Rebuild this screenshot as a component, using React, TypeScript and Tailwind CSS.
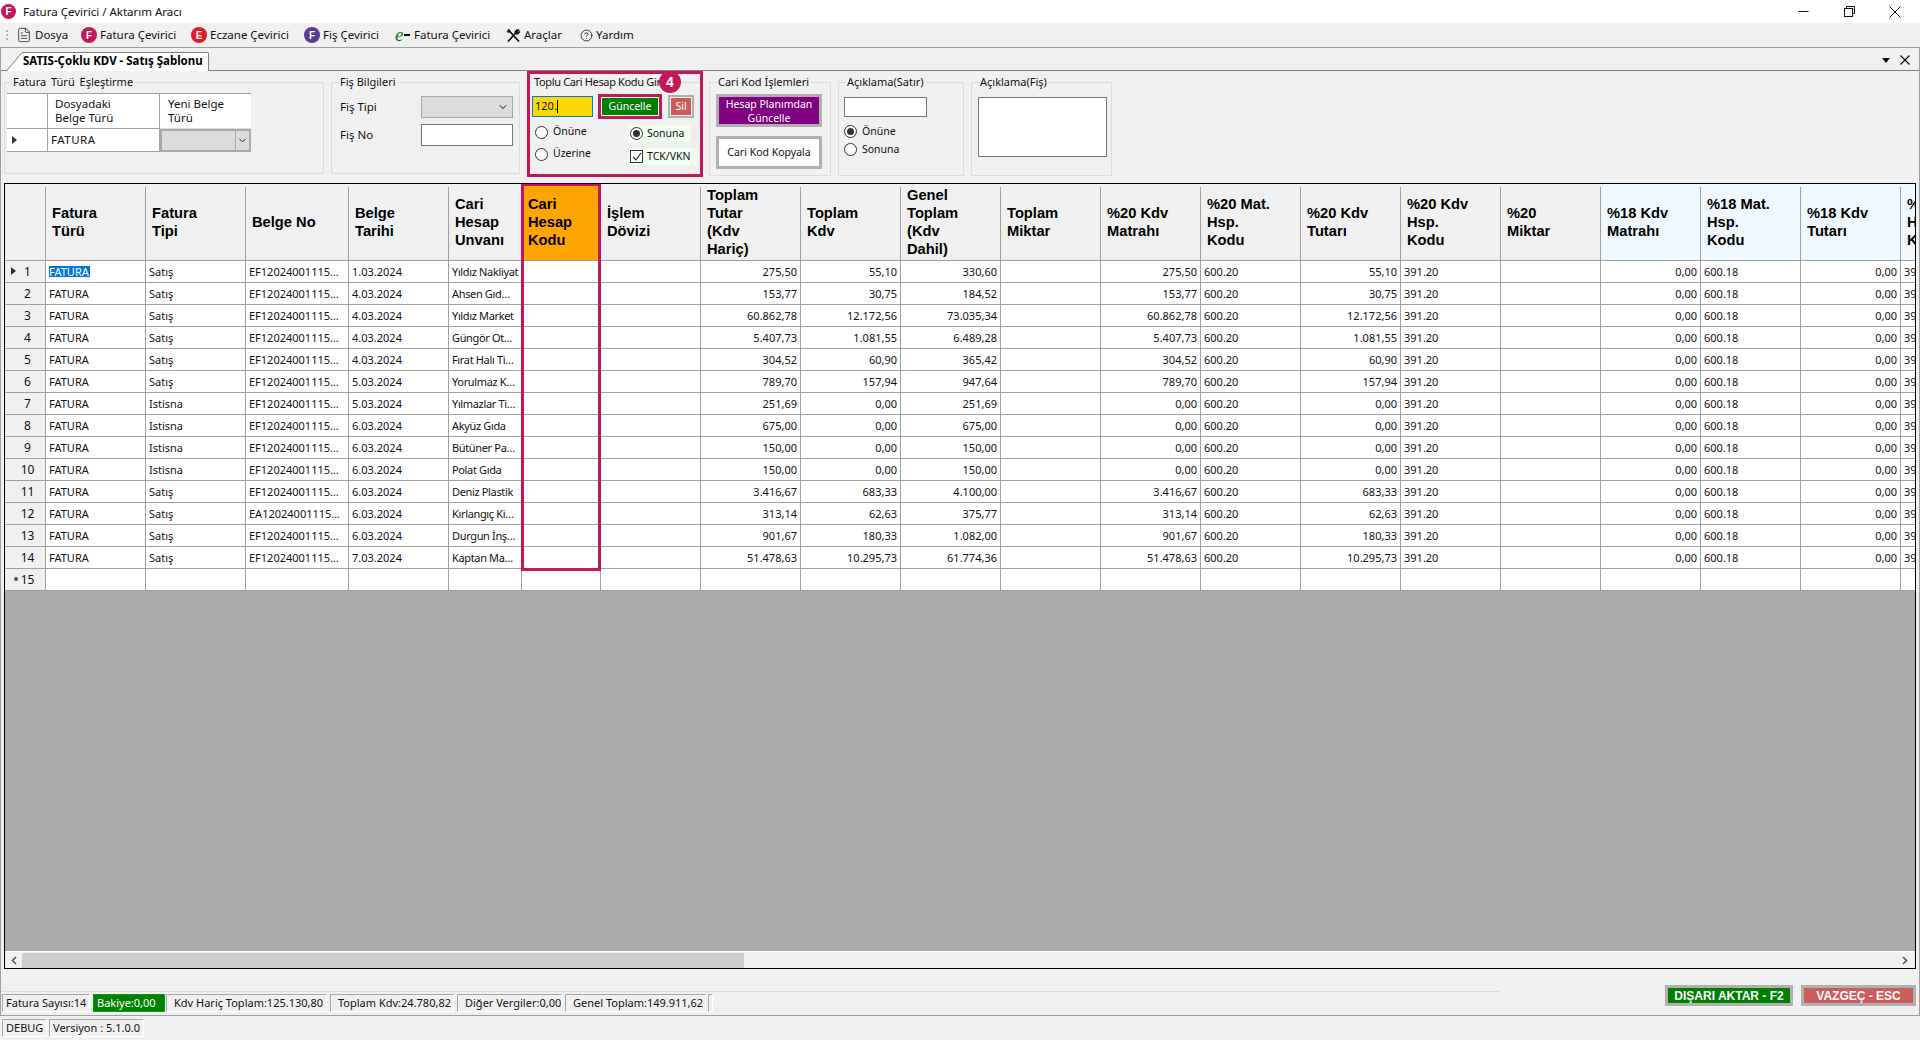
import React from "react";
import { FileText, CircleHelp, ChevronDown } from "lucide-react";

const Logo = ({ c, l, size = 16 }: { c: string; l: string; size?: number }) => (
  <span
    className={`flex shrink-0 items-center justify-center rounded-full font-['Liberation_Sans',sans-serif] font-bold text-white text-[10px] ${c}`}
    style={{ width: size, height: size }}
  >
    {l}
  </span>
);

const Radio = ({ on }: { on?: boolean }) => (
  <span className="flex h-[13px] w-[13px] shrink-0 items-center justify-center rounded-full border border-[#333] bg-white">
    {on && <span className="h-[7px] w-[7px] rounded-full bg-[#333]" />}
  </span>
);

const Group = ({
  title,
  className,
  titleClass = "left-[7px]",
  children,
}: {
  title: string;
  className: string;
  titleClass?: string;
  children?: React.ReactNode;
}) => (
  <div className={`relative shrink-0 border border-[#dcdcdc] ${className}`}>
    <span className={`absolute top-[-9px] bg-[#f0f0f0] px-[1px] text-[11px] leading-[16px] text-[#111] whitespace-nowrap ${titleClass}`}>{title}</span>
    {children}
  </div>
);

const Tri = () => <span className="block h-0 w-0 border-y-[4px] border-l-[5px] border-y-transparent border-l-[#333]" />;

const MENU = [
  { w: "w-[65px]", icon: <FileText size={16} strokeWidth={1.1} className="text-[#111]" />, t: "Dosya" },
  { w: "w-[110px]", icon: <Logo c="bg-[#c2185b]" l="F" />, t: "Fatura Çevirici" },
  { w: "w-[113px]", icon: <Logo c="bg-[#e01b24]" l="E" />, t: "Eczane Çevirici" },
  { w: "w-[91px]", icon: <Logo c="bg-[#5c3a8e]" l="F" />, t: "Fiş Çevirici" },
  {
    w: "w-[111px]",
    icon: (
      <span className="flex w-[16px] items-center font-['Liberation_Serif',serif] italic text-[19px] leading-[16px] text-[#008000]">
        e<span className="ml-[1px] h-[1.5px] w-[6px] bg-[#111]" />
      </span>
    ),
    t: "Fatura Çevirici",
  },
  {
    w: "w-[74px]",
    icon: (
      <svg width="15" height="15" viewBox="0 0 15 15" fill="none" stroke="#111" strokeWidth="1.8">
        <path d="M2 1.5l11 12M13 1.5L2 13.5" />
        <path d="M9 5.5c-.8-1.8.5-4 2.8-4l-1.3 1.8 1.2 1.2L13.8 3c.3 2-1.6 3.8-3.6 3.2" fill="#111" strokeWidth=".6" />
        <path d="M1 3.5l2-2 1.5 1.5-2 2z" fill="#111" strokeWidth=".4" />
      </svg>
    ),
    t: "Araçlar",
  },
  { w: "w-[60px]", icon: <CircleHelp size={13} strokeWidth={1.5} className="text-[#111]" />, t: "Yardım" },
];

const HEADERS: { l: string[]; c?: string }[] = [
  { l: ["Fatura", "Türü"] },
  { l: ["Fatura", "Tipi"] },
  { l: ["Belge No"] },
  { l: ["Belge", "Tarihi"] },
  { l: ["Cari", "Hesap", "Unvanı"] },
  { l: ["Cari", "Hesap", "Kodu"], c: "bg-[#ffa500]" },
  { l: ["İşlem", "Dövizi"] },
  { l: ["Toplam", "Tutar", "(Kdv", "Hariç)"] },
  { l: ["Toplam", "Kdv"] },
  { l: ["Genel", "Toplam", "(Kdv", "Dahil)"] },
  { l: ["Toplam", "Miktar"] },
  { l: ["%20 Kdv", "Matrahı"] },
  { l: ["%20 Mat.", "Hsp.", "Kodu"] },
  { l: ["%20 Kdv", "Tutarı"] },
  { l: ["%20 Kdv", "Hsp.", "Kodu"] },
  { l: ["%20", "Miktar"] },
  { l: ["%18 Kdv", "Matrahı"], c: "bg-[#f0f8ff]" },
  { l: ["%18 Mat.", "Hsp.", "Kodu"], c: "bg-[#f0f8ff]" },
  { l: ["%18 Kdv", "Tutarı"], c: "bg-[#f0f8ff]" },
  { l: ["%18 Kdv", "Hsp.", "Kodu"], c: "bg-[#f0f8ff]" },
];

const RAW: [string, string, string, string, string, string, string][] = [
  ["Satış", "EF12024001115…", "1.03.2024", "Yıldız Nakliyat", "275,50", "55,10", "330,60"],
  ["Satış", "EF12024001115…", "4.03.2024", "Ahsen Gıd…", "153,77", "30,75", "184,52"],
  ["Satış", "EF12024001115…", "4.03.2024", "Yıldız Market", "60.862,78", "12.172,56", "73.035,34"],
  ["Satış", "EF12024001115…", "4.03.2024", "Güngör Ot…", "5.407,73", "1.081,55", "6.489,28"],
  ["Satış", "EF12024001115…", "4.03.2024", "Fırat Halı Ti…", "304,52", "60,90", "365,42"],
  ["Satış", "EF12024001115…", "5.03.2024", "Yorulmaz K…", "789,70", "157,94", "947,64"],
  ["Istisna", "EF12024001115…", "5.03.2024", "Yılmazlar Ti…", "251,69", "0,00", "251,69"],
  ["Istisna", "EF12024001115…", "6.03.2024", "Akyüz Gıda", "675,00", "0,00", "675,00"],
  ["Istisna", "EF12024001115…", "6.03.2024", "Bütüner Pa…", "150,00", "0,00", "150,00"],
  ["Istisna", "EF12024001115…", "6.03.2024", "Polat Gıda", "150,00", "0,00", "150,00"],
  ["Satış", "EF12024001115…", "6.03.2024", "Deniz Plastik", "3.416,67", "683,33", "4.100,00"],
  ["Satış", "EA12024001115…", "6.03.2024", "Kırlangıç Ki…", "313,14", "62,63", "375,77"],
  ["Satış", "EF12024001115…", "6.03.2024", "Durgun İnş…", "901,67", "180,33", "1.082,00"],
  ["Satış", "EF12024001115…", "7.03.2024", "Kaptan Ma…", "51.478,63", "10.295,73", "61.774,36"],
];

const GRID =
  "grid grid-cols-[41px_100px_100px_103px_100px_73px_79px_100px_100px_100px_100px_100px_100px_100px_100px_100px_100px_100px_100px_100px_100px]";

const Cell = ({ v, right, tight }: { v?: string; right?: boolean; tight?: boolean }) => (
  <div
    className={`h-[22px] overflow-hidden whitespace-nowrap border-b border-r border-[#a0a0a0] bg-white leading-[21px] ${right ? "pr-[3px] text-right" : "pl-[3px] text-left"} ${tight ? "tracking-[-0.35px]" : ""}`}
  >
    {v}
  </div>
);

const Row = ({ i, r }: { i: number; r?: (typeof RAW)[number] }) => {
  const iptal = r && r[5] === "0,00";
  const vals: { v?: string; right?: boolean; tight?: boolean }[] = r
    ? [
        { v: "FATURA" },
        { v: r[0] },
        { v: r[1] },
        { v: r[2] },
        { v: r[3], tight: true },
        {},
        {},
        { v: r[4], right: true },
        { v: r[5], right: true },
        { v: r[6], right: true },
        {},
        { v: iptal ? "0,00" : r[4], right: true },
        { v: "600.20" },
        { v: r[5], right: true },
        { v: "391.20" },
        {},
        { v: "0,00", right: true },
        { v: "600.18" },
        { v: "0,00", right: true },
        { v: "391.18" },
      ]
    : Array.from({ length: 20 }, () => ({}));
  return (
    <div className={GRID}>
      <div className="relative flex h-[22px] items-center justify-center border-b border-r border-[#a0a0a0] bg-[#f0f0f0] pl-[7px] pr-[2px] text-[12px]">
        {i === 1 && (
          <span className="absolute left-[6px] top-[6px]">
            <Tri />
          </span>
        )}
        {!r && <span className="absolute left-[9px] top-[8px] h-[4px] w-[4px] rounded-full bg-[#555]" />}
        {i}
      </div>
      {vals.map((c, k) =>
        i === 1 && k === 0 ? (
          <div key={k} className="h-[22px] border-b border-r border-[#a0a0a0] bg-white pl-[3px] pt-[5px]">
            <span className="block h-[11px] w-[41px] bg-[#0078d7] text-[11px] leading-[11px] text-white">FATURA</span>
          </div>
        ) : (
          <Cell key={k} v={c.v} right={c.right} tight={c.tight} />
        )
      )}
    </div>
  );
};

const Stat = ({ w, ml, children, green }: { w: string; ml: string; children?: React.ReactNode; green?: boolean }) => (
  <div
    className={`${w} ${ml} h-[18px] shrink-0 overflow-hidden whitespace-nowrap border pl-[3px] leading-[16px] ${
      green ? "border-[#00a000] bg-[#008000] text-white" : "border-b-white border-l-[#a8a8a8] border-r-white border-t-[#a8a8a8]"
    }`}
  >
    {children}
  </div>
);

export default function App() {
  return (
    <div className="flex h-[1040px] w-[1920px] flex-col overflow-hidden bg-[#f0f0f0] font-['Noto_Sans',sans-serif] text-[11px] text-[#111]">
      {/* Title bar */}
      <div className="flex h-[23px] shrink-0 items-center bg-white pl-[1px]">
        <Logo c="bg-[#c2185b]" l="F" size={15} />
        <span className="ml-[7px] text-[11.5px]">Fatura Çevirici / Aktarım Aracı</span>
        <div className="ml-auto flex items-center pr-[19px]">
          <svg width="11" height="11" viewBox="0 0 11 11" className="mr-[35px]"><path d="M0.5 5.5h10" stroke="#111" /></svg>
          <svg width="11" height="11" viewBox="0 0 11 11" className="mr-[34px]" fill="none" stroke="#111"><path d="M2.5 2.5v-2h8v7h-2" /><rect x=".5" y="2.5" width="8" height="8" /></svg>
          <svg width="12" height="12" viewBox="0 0 12 12" stroke="#111"><path d="M.5.5l11 11M11.5.5l-11 11" /></svg>
        </div>
      </div>

      {/* Menu */}
      <div className="flex h-[24px] shrink-0 items-center pl-[6px] text-[11.5px]">
        <div className="mr-[8px] flex w-[2px] flex-col gap-[2px]">
          <span className="h-[2px] w-[2px] bg-[#b0b0b0]" />
          <span className="h-[2px] w-[2px] bg-[#b0b0b0]" />
          <span className="h-[2px] w-[2px] bg-[#b0b0b0]" />
        </div>
        {MENU.map((m, i) => (
          <div key={i} className={`flex ${m.w} items-center gap-[3px] whitespace-nowrap`}>
            {m.icon}
            <span>{m.t}</span>
          </div>
        ))}
      </div>

      {/* Main panel */}
      <div className="flex h-[969px] shrink-0 flex-col border border-[#a0a0a0]">
        {/* tab strip */}
        <div className="flex h-[23px] shrink-0 items-end border-b border-[#808080] pl-[6px]">
          <div className="-mb-px flex h-[19px]">
            <svg width="16" height="19" viewBox="0 0 16 19" className="shrink-0">
              <path d="M0 19L15 .5H16V19z" fill="#fff" />
              <path d="M0 18.5L15 .5h1" fill="none" stroke="#808080" />
            </svg>
            <div className="flex w-[186px] items-center rounded-tr-[2px] border-r border-t border-[#808080] bg-white pb-[2px] font-bold text-[11.5px] text-black whitespace-nowrap">
              SATIS-Çoklu KDV - Satış Şablonu
            </div>
          </div>
          <div className="ml-auto mb-[5px] flex items-center pr-[9px]">
            <span className="mr-[10px] h-0 w-0 border-x-[4px] border-t-[5px] border-x-transparent border-t-[#111]" />
            <svg width="10" height="10" viewBox="0 0 10 10" stroke="#111" strokeWidth="1.2"><path d="M.5.5l9 9M9.5.5l-9 9" /></svg>
          </div>
        </div>

        {/* groups */}
        <div className="flex h-[112px] shrink-0 items-start pl-[3px]">
          <Group title="Fatura Türü Eşleştirme" className="mt-[11px] h-[92px] w-[320px] pl-[2px] pt-[10px]" titleClass="left-[7px] [word-spacing:2px]">
            <div className="grid w-[244px] grid-cols-[41px_112px_91px] grid-rows-[35px_23px] border-t border-[#a0a0a0] text-[11.5px]">
              <div className="border-b border-r border-[#a0a0a0] bg-white" />
              <div className="border-b border-r border-[#a0a0a0] bg-white pl-[7px] pt-[3px] leading-[14px]">Dosyadaki<br />Belge Türü</div>
              <div className="border-b border-[#dcdcdc] bg-white pl-[8px] pt-[3px] leading-[14px]">Yeni Belge<br />Türü</div>
              <div className="flex items-center border-b border-r border-[#a0a0a0] bg-white pl-[5px]"><Tri /></div>
              <div className="flex items-center border-b border-r border-[#a0a0a0] bg-white pl-[3px] tracking-[0.5px]">FATURA</div>
              <div className="flex items-center justify-end border-2 border-[#a9a9a9] bg-[#dcdcdc]">
                <span className="flex h-full w-[14px] items-center justify-center border-l border-[#a9a9a9]"><ChevronDown size={11} /></span>
              </div>
            </div>
          </Group>

          <Group title="Fiş Bilgileri" className="ml-[7px] mt-[11px] h-[92px] w-[189px] pl-[8px] pr-[6px] pt-[13px]">
            <div className="flex flex-col gap-[6px] text-[11.5px]">
              <div className="flex h-[22px] items-center justify-between">
                <span>Fiş Tipi</span>
                <span className="flex h-full w-[92px] items-center justify-end border border-[#a9a9a9] bg-[#dcdcdc] pr-[3px]"><ChevronDown size={12} /></span>
              </div>
              <div className="flex h-[22px] items-center justify-between">
                <span>Fiş No</span>
                <span className="h-full w-[92px] border border-[#767676] bg-white" />
              </div>
            </div>
          </Group>

          {/* Toplu */}
          <div className="relative ml-[7px] h-[106px] w-[176px] shrink-0 border-[3px] border-[#c2185b]">
            <Group title="Toplu Cari Hesap Kodu Gir" titleClass="left-[3px] tracking-[-0.35px]" className="mt-[8px] h-[92px] w-full border-x-0 border-b-0 pl-[2px] pt-[11px] text-[10.5px]">
              <div className="flex items-center">
                <div className="flex h-[21px] w-[61px] items-center border border-[#0078d7] bg-[#ffd700] pl-[2px] text-[11px]">
                  120.<span className="h-[13px] w-px bg-black" />
                </div>
                <div className="ml-[5px] h-[25px] w-[64px] border-[3px] border-[#c2185b] p-px">
                  <div className="flex h-full items-center justify-center bg-[#008000] text-[10.5px] text-white">Güncelle</div>
                </div>
                <div className="ml-[6px] h-[23px] w-[26px] border-[2px] border-[#b0b0b0] p-[1px]">
                  <div className="flex h-full items-center justify-center bg-[#cd5c5c] text-[10.5px] text-white">Sil</div>
                </div>
              </div>
              <div className="mt-[6px] flex">
                <div className="flex w-[97px] flex-col gap-[8px] pl-[3px]">
                  <label className="flex h-[14px] items-center gap-[5px]"><Radio />Önüne</label>
                  <label className="flex h-[14px] items-center gap-[5px]"><Radio />Üzerine</label>
                </div>
                <div className="flex flex-col gap-[6px]">
                  <label className="flex h-[17px] w-[61px] items-center gap-[4px] bg-[#f0fff0] pl-[1px]"><Radio on />Sonuna</label>
                  <label className="flex h-[17px] w-[68px] items-center gap-[4px] bg-[#f0fff0] pl-[1px]">
                    <span className="flex h-[13px] w-[13px] items-center justify-center border border-[#333] bg-white">
                      <svg width="10" height="10" viewBox="0 0 10 10" fill="none" stroke="#222" strokeWidth="1.1"><path d="M1 5l3 3 5-7" /></svg>
                    </span>
                    TCK/VKN
                  </label>
                </div>
              </div>
            </Group>
            <span className="absolute left-[129px] top-[-3px] flex h-[22px] w-[22px] items-center justify-center rounded-full bg-[#c2185b] font-['Liberation_Sans',sans-serif] font-bold text-[14px] text-white">4</span>
          </div>

          <Group title="Cari Kod İşlemleri" className="ml-[6px] mt-[11px] h-[94px] w-[122px] pl-[6px] pt-[11px] text-[10.5px]">
            <div className="flex w-[106px] flex-col gap-[9px]">
              <div className="h-[33px] border-[3px] border-[#b0b0b0] bg-[#800080] pt-px text-center leading-[13.5px] text-white">Hesap Planımdan<br />Güncelle</div>
              <div className="flex h-[33px] items-center justify-center border-[3px] border-[#b0b0b0] bg-white pt-px">Cari Kod Kopyala</div>
            </div>
          </Group>

          <Group title="Açıklama(Satır)" className="ml-[7px] mt-[11px] h-[94px] w-[126px] pl-[5px] pt-[14px] text-[10.5px]">
            <div className="h-[20px] w-[83px] border border-[#767676] bg-white" />
            <div className="mt-[8px] flex flex-col gap-[5px]">
              <label className="flex h-[13px] items-center gap-[5px]"><Radio on />Önüne</label>
              <label className="flex h-[13px] items-center gap-[5px]"><Radio />Sonuna</label>
            </div>
          </Group>

          <Group title="Açıklama(Fiş)" className="ml-[7px] mt-[11px] h-[94px] w-[141px] pl-[6px] pt-[14px]">
            <div className="h-[60px] w-[129px] border border-[#767676] bg-white" />
          </Group>
        </div>

        {/* data grid */}
        <div className="ml-[3px] flex h-[786px] w-[1912px] shrink-0 flex-col border border-black bg-[#ababab]">
          <div className="relative min-h-0 flex-1 overflow-hidden">
            <div className={GRID}>
              <div className="h-[77px] border-b border-[#a0a0a0] bg-[#f0f0f0]" />
              {HEADERS.map((h, i) => (
                <div
                  key={i}
                  className={`flex h-[77px] items-center border-b border-[#a0a0a0] pl-[6px] font-['Liberation_Sans',sans-serif] font-bold text-[14.7px] leading-[18px] text-black whitespace-nowrap ${h.c ?? "bg-[#f0f0f0]"}`}
                >
                  <div>
                    {h.l.map((x, k) => (
                      <div key={k}>{x}</div>
                    ))}
                  </div>
                </div>
              ))}
            </div>
            {/* header separators and pink highlight lie over the grid */}
            <div className="pointer-events-none absolute left-0 top-[3px]">
              <div className={GRID}>
                {[0, ...HEADERS.map((_, i) => i + 1)].map((i) => (
                  <div key={i} className="h-[73px] border-r border-[#a0a0a0]" />
                ))}
              </div>
            </div>
            {RAW.map((r, i) => (
              <Row key={i} i={i + 1} r={r} />
            ))}
            <Row i={15} />
            <div className="pointer-events-none absolute left-[516px] top-[-1px] h-[388px] w-[80px] border-[3px] border-[#c2185b]" />
          </div>
          <div className="flex h-[17px] shrink-0 items-center border-t border-white bg-[#f0f0f0]">
            <svg width="6" height="9" viewBox="0 0 6 9" className="ml-[6px]" fill="none" stroke="#555" strokeWidth="1.6"><path d="M5 1L1.5 4.5 5 8" /></svg>
            <div className="ml-[5px] h-[15px] w-[722px] bg-[#cdcdcd]" />
            <svg width="6" height="9" viewBox="0 0 6 9" className="ml-auto mr-[7px]" fill="none" stroke="#555" strokeWidth="1.6"><path d="M1 1l3.5 3.5L1 8" /></svg>
          </div>
        </div>

        {/* bottom */}
        <div className="flex min-h-0 flex-1 items-start">
          <div className="mt-[22px] w-[1499px] border-t border-[#dcdcdc] pt-[2px]">
            <div className="flex">
              <Stat w="w-[88px]" ml="ml-[1px]">Fatura Sayısı:14</Stat>
              <Stat w="w-[72px]" ml="ml-[3px]" green>Bakiye:0,00</Stat>
              <Stat w="w-[161px]" ml="ml-[1px]"><span className="pl-[4px]">Kdv Hariç Toplam:125.130,80</span></Stat>
              <Stat w="w-[124px]" ml="ml-[3px]"><span className="pl-[4px]">Toplam Kdv:24.780,82</span></Stat>
              <Stat w="w-[105px]" ml="ml-[3px]"><span className="pl-[4px]">Diğer Vergiler:0,00</span></Stat>
              <Stat w="w-[141px]" ml="ml-[3px]"><span className="pl-[4px]">Genel Toplam:149.911,62</span></Stat>
              <Stat w="w-[4px]" ml="ml-[2px]" />
            </div>
          </div>
          <div className="ml-auto mr-[3px] mt-[16px] flex gap-[8px] font-['Liberation_Sans',sans-serif] font-bold text-[12px] text-white">
            <div className="flex h-[21px] w-[128px] items-center justify-center border-[3px] border-[#b0b0b0] bg-[#008000]">DIŞARI AKTAR - F2</div>
            <div className="flex h-[21px] w-[115px] items-center justify-center border-[3px] border-[#b0b0b0] bg-[#cd5c5c]">VAZGEÇ - ESC</div>
          </div>
        </div>
      </div>

      {/* version bar */}
      <div className="flex flex-1 items-start pl-[2px] pt-[3px]">
        <Stat w="w-[45px]" ml="ml-0">DEBUG</Stat>
        <Stat w="w-[95px]" ml="ml-[2px]">Versiyon : 5.1.0.0</Stat>
      </div>
    </div>
  );
}
